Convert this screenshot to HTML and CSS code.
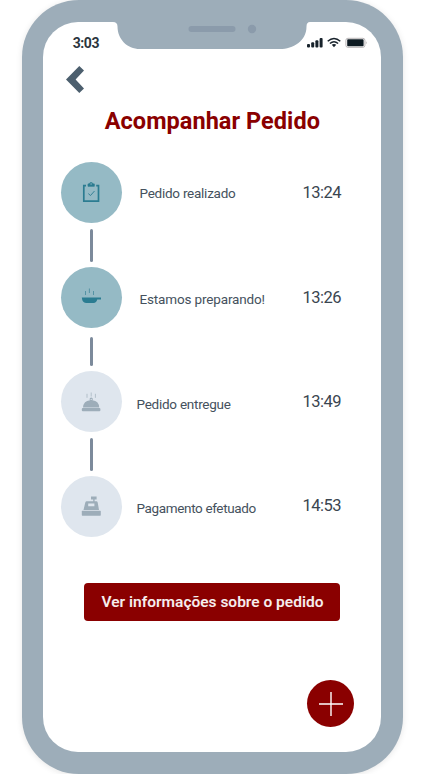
FILE: index.html
```html
<!DOCTYPE html>
<html lang="pt-BR">
<head>
<meta charset="utf-8">
<title>Acompanhar Pedido</title>
<link rel="stylesheet" href="styles.css">
</head>
<body>
<div class="phone">
  <main class="screen">
    <svg class="notch" viewBox="0 0 194 27" aria-hidden="true">
      <path d="M0 0Q4.500 0 4.500 4.500C4.500 17 14 27 27 27H167C180 27 193.500 19 193.500 4.500Q193.500 0 197 0Z" fill="#9dadb9"/>
      <rect x="75.500" y="4" width="47" height="6" rx="3" fill="#8b9bab"/>
      <circle cx="139" cy="7" r="4.200" fill="#8b9bab"/>
    </svg>
    <header class="status">
      <span class="clock">3:03</span>
      <svg class="signals" viewBox="0 0 60 12" aria-hidden="true">
        <g fill="#17222b">
          <rect x="0" y="7" width="3" height="3.500" rx="1"/>
          <rect x="4.200" y="5.300" width="3" height="5.200" rx="1"/>
          <rect x="8.400" y="3.200" width="3" height="7.300" rx="1"/>
          <rect x="12.600" y="1" width="3" height="9.500" rx="1"/>
          <path d="M24.800 7.800Q27 6.300 29.200 7.800L27 10.200Z"/>
        </g>
        <g fill="none" stroke="#17222b" stroke-width="1.500">
          <path d="M20.700 4.300Q27 -1.200 33.300 4.300"/>
          <path d="M22.900 6.500Q27 3 31.100 6.500"/>
        </g>
        <rect x="38.900" y="1.300" width="19" height="9" rx="2" fill="#fff" stroke="#b8b4b6" stroke-width="1"/>
        <rect x="40.200" y="2.300" width="16.400" height="7" rx=".8" fill="#0d1a22"/>
        <path d="M58.900 4.300Q60.500 5.800 58.900 7.300Z" fill="#b8b4b6"/>
      </svg>
    </header>
    <svg class="back" viewBox="0 0 18 28" role="img">
      <path d="M13.300 0L18 4.500 9.600 13.500 18 22.400 13.300 27 0 13.500Z" fill="#4c5f6e"/>
    </svg>
    <h1 class="title">Acompanhar Pedido</h1>

    <ol class="steps">
      <li class="step done">
        <div class="rail">
          <span class="dot">
            <svg class="icon" viewBox="0 0 20 22" aria-hidden="true">
              <g fill="none" stroke="#2b7c91">
                <path d="M5 3.600H2.800V19.200H17.500V3.600H15.200" stroke-width="1.700"/>
                <path d="M7 1.900H8.300Q8.600 .6 10.100 .6T11.900 1.900H13.300V4.300H7Z" fill="#2b7c91" stroke-width=".7"/>
                <path d="M7.300 11.600L9.500 13.500 13.500 9" stroke-width=".9"/>
              </g>
              <circle cx="10.100" cy="2" r=".7" fill="#95bac5"/>
            </svg>
          </span>
          <span class="link"></span>
        </div>
        <span class="label realizado">Pedido realizado</span>
        <time class="time">13:24</time>
      </li>
      <li class="step done">
        <div class="rail">
          <span class="dot">
            <svg class="icon" viewBox="0 0 20 22" aria-hidden="true">
              <path d="M.8 11.500H20V13.500H16.200Q15.500 16.600 12.500 17H5Q1.200 16.500 .8 11.500Z" fill="#2b7c91"/>
              <path d="M4.500 5V9M8.400 2.500V7M12.500 5V9" fill="none" stroke="#4e8fa0" stroke-width=".9"/>
            </svg>
          </span>
          <span class="link second"></span>
        </div>
        <span class="label preparando">Estamos preparando!</span>
        <time class="time">13:26</time>
      </li>
      <li class="step">
        <div class="rail">
          <span class="dot">
            <svg class="icon" viewBox="0 0 20 22" aria-hidden="true">
              <g fill="#9dadb9">
                <path d="M2 16.500Q2.600 9.900 9 9.300A1.600 1.600 0 1 1 11.400 9.300Q17.800 9.900 18.200 16.500Z"/>
                <rect x=".8" y="17.100" width="18.600" height="3.200" rx="1"/>
              </g>
              <circle cx="10.200" cy="8.400" r=".6" fill="#dfe6ee"/>
              <path d="M6 2.800V6.800M10.200 1.500V5.500M14.400 2.800V6.800" stroke="#b3c0ca" fill="none"/>
            </svg>
          </span>
          <span class="link third"></span>
        </div>
        <span class="label entregue">Pedido entregue</span>
        <time class="time">13:49</time>
      </li>
      <li class="step">
        <div class="rail">
          <span class="dot">
            <svg class="icon" viewBox="0 0 20 22" aria-hidden="true">
              <path fill="#9dadb9" fill-rule="evenodd" d="M10 1.400H15.600V4.400H13.600V6.300H15.500Q16.400 6.300 16.700 7.400L18 15H2.500L4.300 7.400Q4.700 6.300 5.600 6.300H12.200V4.400H10ZM7.200 8.500V11.300H13.400V8.500Z"/>
              <rect x=".8" y="15.800" width="19" height="4.900" rx=".6" fill="#9dadb9"/>
            </svg>
          </span>
        </div>
        <span class="label pagamento">Pagamento efetuado</span>
        <time class="time">14:53</time>
      </li>
    </ol>

    <button class="details" type="button">Ver informações sobre o pedido</button>
    <button class="add" type="button">
      <svg viewBox="0 0 24 24" aria-hidden="true"><path d="M12 0V24M0 12H24" stroke="#fff" stroke-width="1.400"/></svg>
    </button>
  </main>
</div>
</body>
</html>
```
FILE: styles.css
```css
* { box-sizing: border-box; }

body {
  margin: 0;
  background: #fff;
  font-family: Roboto, "Liberation Sans", sans-serif;
  color: #45515d;
}

.phone {
  width: 381px;
  height: 774px;
  margin-left: 21.700px;
  padding: 22px 21.500px;
  background: #9dadb9;
  border-radius: 57px;
  box-shadow: 0 1px 6px rgba(0, 0, 0, .1);
}

.screen {
  position: relative;
  display: flex;
  flex-direction: column;
  height: 730px;
  background: #fff;
  border-radius: 35px;
}

.notch {
  position: absolute;
  top: 0;
  left: 69.500px;
  width: 194px;
  height: 27px;
  overflow: visible;
}

.status {
  display: flex;
  justify-content: space-between;
  height: 44px;
  padding: 13px 14px 0 29.500px;
}

.clock {
  font-size: 14px;
  font-weight: 700;
  line-height: 17px;
  letter-spacing: -.4px;
  color: #2b353d;
}

.signals {
  width: 60px;
  height: 12px;
  margin-top: 2px;
}

.back {
  width: 18px;
  height: 28px;
  margin-left: 23px;
}

.title {
  margin: 12px 0 0;
  padding-left: 61.500px;
  font-size: 23.500px;
  font-weight: 700;
  line-height: 30px;
  letter-spacing: .05px;
  color: #8a0000;
  white-space: nowrap;
}

.steps {
  margin: 26.400px 0 0;
  padding: 0 40px 0 17.800px;
  list-style: none;
}

.step {
  display: grid;
  grid-template-columns: 61px 180.500px 38px;
  height: 104.400px;
}

.rail {
  display: flex;
  flex-direction: column;
  align-items: center;
}

.dot {
  display: grid;
  place-items: center;
  width: 61px;
  height: 61px;
  border-radius: 50%;
  background: #dfe6ee;
}

.done .dot { background: #95bac5; }

.icon {
  width: 20px;
  height: 22px;
}

.link {
  width: 3.700px;
  height: 33px;
  margin-top: 6px;
  border-radius: 2px;
  background: #7c8a9b;
}

.link.second {
  height: 29px;
  margin-top: 9.500px;
}

.label {
  padding: 21.500px 0 0 17.500px;
  font-size: 13.500px;
  line-height: 18px;
  letter-spacing: -.25px;
  white-space: nowrap;
}

.preparando {
  padding-top: 23.500px;
  letter-spacing: -.15px;
}

.entregue { padding: 24px 0 0 14.500px; }

.pagamento {
  padding: 23.500px 0 0 14.500px;
  letter-spacing: -.36px;
}

.time {
  padding-top: 20.800px;
  font-size: 16.500px;
  line-height: 19px;
  letter-spacing: -.5px;
  color: #3a4550;
}

.details {
  width: 256px;
  height: 38px;
  margin: 3px 0 0 41.300px;
  padding: 0;
  border: 0;
  border-radius: 4px;
  background: #8a0000;
  color: #f6eded;
  font: 600 15.500px/38px Roboto, "Liberation Sans", sans-serif;
  white-space: nowrap;
}

.add {
  display: grid;
  place-items: center;
  width: 47px;
  height: 47px;
  margin: auto 27px 24.600px auto;
  padding: 0;
  border: 0;
  border-radius: 50%;
  background: #8a0000;
}

.add svg {
  width: 24px;
  height: 24px;
}
```
